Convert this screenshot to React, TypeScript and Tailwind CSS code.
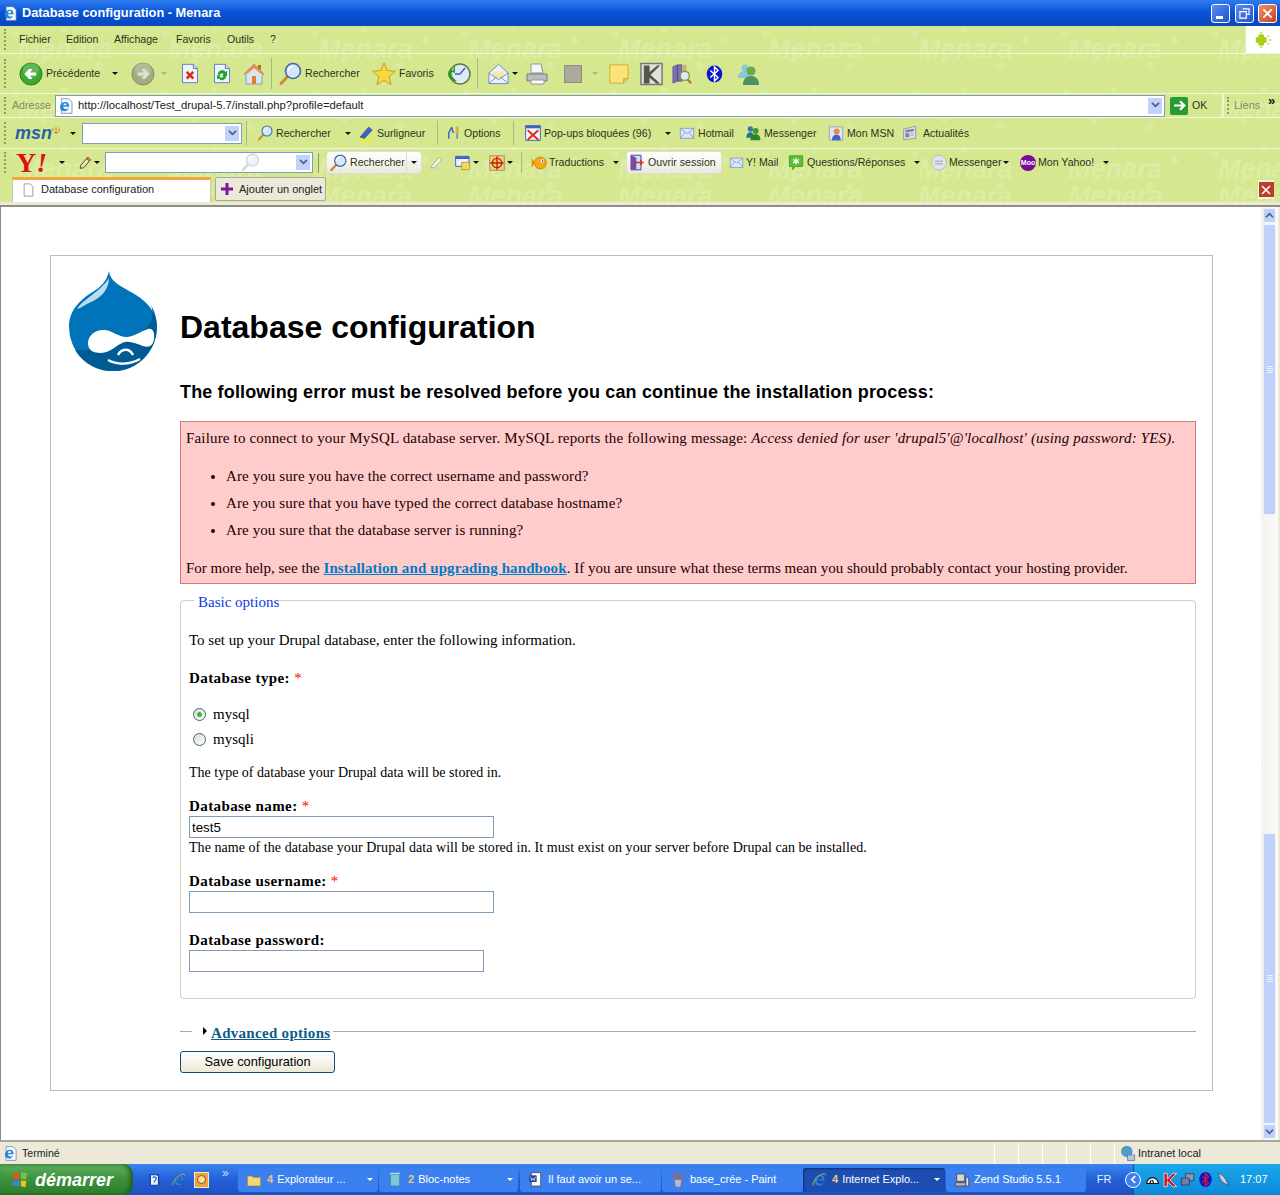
import type { ReactNode } from 'react';

// Old IE/Menara browser window on a Drupal 5 install page. Chrome rows are fixed-height flex rows.

const waterRows = [0, 1, 2, 3];
const waterCols = [0, 1, 2, 3, 4, 5, 6, 7, 8];

function Svg({ className, children }: { className: string; children: ReactNode }) {
  return (
    <svg viewBox="0 0 24 24" className={`shrink-0 ${className}`}>
      {children}
    </svg>
  );
}

function IeIcon({ className }: { className: string }) {
  return (
    <Svg className={className}>
      <path d="M5 14c0-6 4-10 9-10 5 0 7 4 7 9H9c.3 5 7 6 11 2-1 4-4 6-8 6-4 0-7-3-7-7zM9 10.500h7.500C16.500 8 14.800 6.500 13 6.500 11 6.500 9.500 8 9 10.500z" fill="#2a86d8" stroke="#0f4f9a" strokeWidth=".8" />
      <path d="M3 20C2 17 7 8 15 4c4-2 7-2 7 1" fill="none" stroke="#e8b030" strokeWidth="1.300" />
    </Svg>
  );
}

function PageIe({ className }: { className: string }) {
  return (
    <Svg className={className}>
      <path d="M5 1h11l5 5v17H5z" fill="#f4f8ff" stroke="#53708f" />
      <path d="M3 14c0-5 4-8 8-8s6 3 6 7H8c.3 4 5 5 8 2-1 3-3 5-6 5-4 0-7-2-7-6zM8 11h5c0-2-1-3-2.500-3S8.500 9 8 11z" fill="#2a86d8" />
    </Svg>
  );
}

function ArrowCircle({ className, dir, grey }: { className: string; dir: 'left' | 'right'; grey?: boolean }) {
  const d = dir === 'left' ? 'M17 10.500h-6l2.500-3.500H10l-4.500 5 4.500 5h3.500L11 13.500h6z' : 'M7 10.500h6L10.500 7H14l4.500 5-4.500 5h-3.500l2.500-3.500H7z';
  return (
    <Svg className={className}>
      <circle cx="12" cy="12" r="11" fill={grey ? '#a3ab84' : '#3ea82f'} stroke={grey ? '#858c6c' : '#1f7a1c'} />
      <circle cx="12" cy="8" r="8" fill="#fff" opacity=".18" />
      <path d={d} fill={grey ? '#dfe3c9' : '#fff'} />
    </Svg>
  );
}

function DocBase({ children }: { children: ReactNode }) {
  return (
    <>
      <path d="M3 1h13l5 5v17H3z" fill="#eef3ff" stroke="#4e6fb0" />
      <path d="M16 1v5h5" fill="#c9d6f2" stroke="#4e6fb0" />
      {children}
    </>
  );
}

function Magnifier({ className, pale }: { className: string; pale?: boolean }) {
  return (
    <Svg className={className}>
      <path d="M10 14L3 21.500" stroke={pale ? '#cfdcc0' : '#c98a2e'} strokeWidth="3" strokeLinecap="round" />
      <circle cx="15" cy="9" r="7.500" fill={pale ? '#eef4fb' : '#d5e6f8'} stroke={pale ? '#c9d5e0' : '#3f6aa8'} strokeWidth="1.600" />
      <path d="M10.500 9c0-2.500 2-4.500 4.500-4.500" stroke="#fff" strokeWidth="1.500" fill="none" />
    </Svg>
  );
}

function Mail({ className, open }: { className: string; open?: boolean }) {
  return (
    <Svg className={className}>
      {open && <path d="M2 11L12 2l10 9" fill="#f2e9c8" stroke="#6f8ac2" />}
      <path d="M2 5h20v15H2z" fill="#dbe5fb" stroke="#6f8ac2" />
      <path d="M2 5l10 8 10-8M2 20l7-9M22 20l-7-9" fill="none" stroke="#6f8ac2" />
    </Svg>
  );
}

function Friends({ className }: { className: string }) {
  return (
    <Svg className={className}>
      <circle cx="8" cy="6" r="4" fill="#2f7f9c" />
      <path d="M2 19c0-6 3-8 6-8s5 2 5 8z" fill="#2a6f90" />
      <circle cx="16" cy="9" r="4.500" fill="#3f9a3a" />
      <path d="M8 23c0-7 4-9 8-9s7 2 7 9z" fill="#2f8430" />
    </Svg>
  );
}

function Grip() {
  return <span className="ml-[4px] h-[75%] w-[3px] shrink-0 border-l-2 border-dotted border-[#8f9b6a]" />;
}

function Sep({ className }: { className: string }) {
  return <span className={`h-[78%] w-px shrink-0 bg-[#a9b888] ${className}`} />;
}

function Caret({ className, faint }: { className: string; faint?: boolean }) {
  return (
    <span
      className={`h-0 w-0 shrink-0 border-x-[3px] border-t-[3px] border-x-transparent ${faint ? 'border-t-[#aab78a]' : 'border-t-[#111]'} ${className}`}
    />
  );
}

function Combo() {
  return (
    <span className="flex h-full w-[16px] shrink-0 items-center justify-center border border-white bg-[#c1d3fb]">
      <svg viewBox="0 0 10 8" className="h-[7px] w-[9px]">
        <path d="M1 1l4 4 4-4" fill="none" stroke="#4d6185" strokeWidth="2" />
      </svg>
    </span>
  );
}

function Label({ className, children }: { className: string; children: ReactNode }) {
  return <span className={`shrink-0 text-[10.600px] whitespace-nowrap text-[#2b3320] ${className}`}>{children}</span>;
}

function Watermark() {
  return (
    <div className="absolute inset-0 overflow-hidden">
      <svg className="absolute inset-0 h-full w-full">
        <defs>
          <pattern id="diamonds" width="150" height="60" patternUnits="userSpaceOnUse">
            <path d="M10 8l5-5 5 5-5 5zM60 4l4-4 4 4-4 4zM120 14l5-5 5 5-5 5zM40 34l4-4 4 4-4 4zM95 40l5-5 5 5-5 5z" fill="#d9eb9c" />
          </pattern>
        </defs>
        <rect width="100%" height="100%" fill="url(#diamonds)" />
      </svg>
      <div className="grid grid-cols-[repeat(9,150px)] grid-rows-[60px_60px_27px_60px] pl-[18px] pt-[8px]">
        {waterRows.map(r =>
          waterCols.map(c => (
            <span key={`${r}-${c}`} className="text-[27px] leading-[30px] font-bold italic text-[#dcedA3]">
              Menara
            </span>
          ))
        )}
      </div>
    </div>
  );
}

function TitleBar() {
  return (
    <div className="relative flex h-[26px] items-center bg-gradient-to-b from-[#2f7cf0] via-[#0552d6] to-[#0a46bd]">
      <PageIe className="ml-[3px] h-[15px] w-[15px]" />
      <span className="ml-[4px] pt-px text-[12.800px] font-bold whitespace-nowrap text-white">Database configuration - Menara</span>
      <span className="ml-auto flex h-[19px] w-[19px] items-end rounded-[3px] border border-white bg-gradient-to-br from-[#5a8cf0] to-[#2351cf] pb-[3px] pl-[4px]">
        <span className="h-[3px] w-[7px] bg-white" />
      </span>
      <span className="ml-[5px] flex h-[19px] w-[19px] items-center justify-center rounded-[3px] border border-white bg-gradient-to-br from-[#5a8cf0] to-[#2351cf]">
        <svg viewBox="0 0 12 12" className="h-[11px] w-[11px]">
          <path d="M4 1h7v6H9M1 4h7v7H1z" fill="none" stroke="#fff" strokeWidth="1.300" />
        </svg>
      </span>
      <span className="mr-[3px] ml-[4px] flex h-[19px] w-[19px] items-center justify-center rounded-[3px] border border-white bg-gradient-to-br from-[#ef8f6c] to-[#c9401e]">
        <svg viewBox="0 0 12 12" className="h-[11px] w-[11px]">
          <path d="M1.500 1.500l9 9M10.500 1.500l-9 9" stroke="#fff" strokeWidth="2" />
        </svg>
      </span>
    </div>
  );
}

function MenuBar() {
  return (
    <div className="relative flex h-[28px] items-center border-b border-[#f2f8dc]">
      <Grip />
      <Label className="ml-[12px] w-[47px]">Fichier</Label>
      <Label className="w-[48px]">Edition</Label>
      <Label className="w-[62px]">Affichage</Label>
      <Label className="w-[51px]">Favoris</Label>
      <Label className="w-[43px]">Outils</Label>
      <Label className="w-[10px]">?</Label>
      <span className="ml-auto flex h-full w-[35px] items-center justify-center border-l border-[#e3e3d0] bg-white">
        <svg viewBox="0 0 20 20" className="h-[18px] w-[18px]">
          <path d="M5 4h6v12H5zM2 7h12v6H2z" fill="#a8d010" />
          <path d="M15 5h2v2h-2zM17 9h2v2h-2zM15 13h2v2h-2zM7 1h2v2H7zM7 17h2v2H7z" fill="#bfdc50" />
        </svg>
      </span>
    </div>
  );
}

function MainToolbar() {
  return (
    <div className="relative flex h-[40px] items-center border-b border-[#f2f8dc]">
      <Grip />
      <ArrowCircle dir="left" className="ml-[12px] h-[24px] w-[24px]" />
      <Label className="ml-[3px] w-[56px]">Précédente</Label>
      <Caret className="ml-[10px]" />
      <ArrowCircle dir="right" grey className="ml-[13px] h-[24px] w-[24px]" />
      <Caret faint className="ml-[6px]" />
      <Svg className="ml-[13px] h-[23px] w-[20px]">
        <DocBase>
          <path d="M8 10l8 8M16 10l-8 8" stroke="#e02c14" strokeWidth="3" />
        </DocBase>
      </Svg>
      <Svg className="ml-[12px] h-[23px] w-[20px]">
        <DocBase>
          <path d="M7 13a5 5 0 0 1 9-3l2-1v6h-6l2-2a3 3 0 0 0-5 1zM17 15a5 5 0 0 1-9 3l-2 1v-5h5l-2 2a3 3 0 0 0 5-1z" fill="#25a52f" />
        </DocBase>
      </Svg>
      <Svg className="ml-[10px] h-[24px] w-[24px]">
        <path d="M2 12L12 2l10 10-2 1v9H4v-9z" fill="#d7e5f5" stroke="#8a9cb8" />
        <path d="M2 12L12 2l10 10-3 0-7-6-7 6z" fill="#ef8f3c" />
        <path d="M10 14h4v8h-4z" fill="#e57e2c" />
        <path d="M16 3h3v5l-3-2z" fill="#b86a30" />
      </Svg>
      <Sep className="ml-[5px]" />
      <Magnifier className="ml-[6px] h-[24px] w-[24px]" />
      <Label className="ml-[3px] w-[55px]">Rechercher</Label>
      <Svg className="ml-[12px] h-[24px] w-[24px]">
        <path d="M12 1l3.300 7.500 8 .8-6 5.400 1.800 8L12 18.500 4.900 22.700l1.800-8-6-5.400 8-.8z" fill="#f7d83a" stroke="#c99a20" />
      </Svg>
      <Label className="ml-[3px] w-[36px]">Favoris</Label>
      <Svg className="ml-[12px] h-[24px] w-[24px]">
        <circle cx="13" cy="12" r="10" fill="#dfe9f8" stroke="#5e7d3a" strokeWidth="1.500" />
        <path d="M13 12l5-6M13 12H8" stroke="#3a6ab0" strokeWidth="1.600" />
        <path d="M1 12c0-3 2-5 3-6l2 3 2-7v9l-3-1c-1 2 0 6 5 9-5 1-9-3-9-7z" fill="#2f9a2c" />
      </Svg>
      <Sep className="ml-[6px]" />
      <Svg className="ml-[9px] h-[24px] w-[23px]">
        <path d="M2 11L12 2l10 9v11H2z" fill="#eef3ff" stroke="#6f8ac2" />
        <path d="M6 9h12v6l-6 3-6-3z" fill="#f6e7a8" />
        <path d="M2 11l10 7 10-7M2 22l8-7M22 22l-8-7" fill="none" stroke="#6f8ac2" />
      </Svg>
      <Caret className="ml-[2px]" />
      <Svg className="ml-[7px] h-[24px] w-[24px]">
        <path d="M6 2h10l2 9H6z" fill="#f8f8f8" stroke="#8d949c" />
        <path d="M2 12h20v7H2z" fill="#b9bec4" stroke="#757b82" />
        <path d="M6 18h13v4H6z" fill="#fff" stroke="#8d949c" />
      </Svg>
      <span className="ml-[15px] h-[18px] w-[18px] shrink-0 border border-[#8e8e80] bg-[#aaa99c]" />
      <Caret faint className="ml-[10px]" />
      <Svg className="ml-[10px] h-[24px] w-[22px]">
        <path d="M2 2h20v15l-5 5H2z" fill="#fbe27a" stroke="#d0a830" />
        <path d="M17 22v-5h5" fill="#e8c54e" stroke="#d0a830" />
      </Svg>
      <Svg className="ml-[10px] h-[24px] w-[23px]">
        <path d="M1 1h22v22H1z" fill="#e2e2dc" stroke="#77776e" strokeWidth="1.500" />
        <path d="M4 3h6v7l8-7h3L11 13l10 9h-4l-7-6v6H4z" fill="#55554f" />
      </Svg>
      <Svg className="ml-[8px] h-[24px] w-[22px]">
        <path d="M2 4l5-2v18l-5 2zM7 2h5v18H7z" fill="#7d71b8" stroke="#4b4480" strokeWidth=".6" />
        <path d="M12 2h5v11h-5z" fill="#c7b26e" />
        <circle cx="15" cy="14" r="5" fill="#d8ecf8" stroke="#a08a45" strokeWidth="1.500" />
        <path d="M18 18l4 4" stroke="#b47a28" strokeWidth="2.500" />
      </Svg>
      <Svg className="ml-[13px] h-[24px] w-[17px]">
        <ellipse cx="12" cy="12" rx="11" ry="12" fill="#0a17cc" />
        <path d="M6 7l11 10-5 5V2l5 5L6 17" fill="none" stroke="#fff" strokeWidth="2" />
      </Svg>
      <Svg className="ml-[13px] h-[24px] w-[24px]">
        <circle cx="9" cy="6" r="3.500" fill="#8cc4d8" />
        <path d="M2 16c0-5 3-7 7-7s4 3 4 7z" fill="#8cc4d8" />
        <circle cx="15" cy="9" r="4.500" fill="#6aa84f" />
        <path d="M7 23c0-7 4-9 8-9s8 2 8 9z" fill="#4f9160" />
      </Svg>
    </div>
  );
}

function AddressBar() {
  return (
    <div className="relative flex h-[24px] items-center border-b border-[#f2f8dc]">
      <Grip />
      <span className="ml-[5px] w-[38px] shrink-0 text-[10.600px] text-[#7d8a66]">Adresse</span>
      <div className="ml-[5px] flex h-[22px] w-[1110px] shrink-0 items-center border border-[#7f9db9] bg-white pr-px pl-[2px]">
        <PageIe className="h-[16px] w-[16px]" />
        <span className="ml-[4px] text-[11.300px] whitespace-nowrap text-[#222]">http://localhost/Test_drupal-5.7/install.php?profile=default</span>
        <span className="ml-auto h-full py-px">
          <Combo />
        </span>
      </div>
      <span className="ml-[5px] flex h-[18px] w-[18px] shrink-0 items-center justify-center rounded-[2px] bg-[#2a9a38]">
        <svg viewBox="0 0 12 12" className="h-[13px] w-[13px]">
          <path d="M1 6h9M6.500 2L10.500 6l-4 4" fill="none" stroke="#fff" strokeWidth="2" />
        </svg>
      </span>
      <Label className="ml-[4px] w-[15px]">OK</Label>
      <span className="ml-[15px] h-full w-[2px] shrink-0 bg-[#eef6d0]" />
      <span className="ml-[3px] h-[75%] w-[3px] shrink-0 border-l-2 border-dotted border-[#8f9b6a]" />
      <span className="ml-[4px] w-[25px] shrink-0 text-[#7d8a66]">Liens</span>
      <span className="ml-[9px] self-start text-[13px] leading-[14px] font-bold text-[#111]">»</span>
    </div>
  );
}

function MsnBar() {
  return (
    <div className="relative flex h-[31px] items-center border-b border-[#f2f8dc]">
      <Grip />
      <span className="ml-[8px] flex w-[46px] shrink-0 items-start">
        <span className="text-[18px] leading-[18px] font-bold italic text-[#2b5fa8]">msn</span>
        <svg viewBox="0 0 12 12" className="-mt-[2px] -ml-px h-[16px] w-[15px]">
          <path d="M2 8L1 3l3 3zM8 7l3-5-1 7z" fill="#e9a020" />
          <path d="M5 6l1-5 1 5z" fill="#5fae3a" />
          <path d="M4 10l2-3 2 3z" fill="#d84a30" />
        </svg>
      </span>
      <Caret className="ml-[9px]" />
      <span className="ml-[6px] flex h-[21px] w-[160px] shrink-0 justify-end border border-[#7f9db9] bg-white p-px">
        <Combo />
      </span>
      <Sep className="ml-[4px]" />
      <Magnifier className="ml-[10px] h-[16px] w-[16px]" />
      <Label className="ml-[3px] w-[55px]">Rechercher</Label>
      <Caret className="ml-[14px]" />
      <Svg className="ml-[7px] h-[17px] w-[17px]">
        <path d="M3 17L15 3l5 4L9 19z" fill="#3f63c8" stroke="#26408c" />
        <path d="M1 20h20v3H1z" fill="#f4ee20" />
      </Svg>
      <Label className="ml-[2px] w-[48px]">Surligneur</Label>
      <Sep className="ml-[12px]" />
      <Svg className="ml-[9px] h-[18px] w-[14px]">
        <path d="M8 2L3 12v10M8 2l3 10" fill="none" stroke="#3f63c8" strokeWidth="2.500" />
        <path d="M15 1h5v12h-5z" fill="#e0b030" />
        <path d="M17.500 13v9" stroke="#5f7ec8" strokeWidth="2.500" />
      </Svg>
      <Label className="ml-[3px] w-[38px]">Options</Label>
      <Sep className="ml-[11px]" />
      <Svg className="ml-[11px] h-[16px] w-[16px]">
        <path d="M1 1h22v22H1z" fill="#f6f8ff" stroke="#3f63c8" strokeWidth="1.500" />
        <path d="M1 1h22v4H1z" fill="#3f63c8" />
        <path d="M4 8l16 14M20 8L4 22" stroke="#e02c14" strokeWidth="3" />
      </Svg>
      <Label className="ml-[3px] w-[108px]">Pop-ups bloquées (96)</Label>
      <Caret className="ml-[13px]" />
      <Mail className="ml-[8px] h-[16px] w-[16px]" />
      <Label className="ml-[3px] w-[35px]">Hotmail</Label>
      <Friends className="ml-[12px] h-[16px] w-[16px]" />
      <Label className="ml-[3px] w-[52px]">Messenger</Label>
      <Svg className="ml-[12px] h-[17px] w-[16px]">
        <path d="M2 2h20v20H2z" fill="#dfe6f6" stroke="#7c8bb4" />
        <circle cx="13" cy="9" r="4.500" fill="#e88a48" />
        <path d="M6 22c0-6 3-8 7-8s6 2 6 8z" fill="#3f63c8" />
      </Svg>
      <Label className="ml-[3px] w-[44px]">Mon MSN</Label>
      <Svg className="ml-[12px] h-[16px] w-[16px]">
        <path d="M1 6l18-4v18L1 22z" fill="#e4e6ee" stroke="#6f7894" />
        <path d="M4 8l12-2v3L4 11zM4 13h5v5H4zM11 13h5M11 16h5" fill="#7d86a4" stroke="#7d86a4" />
      </Svg>
      <Label className="ml-[4px] w-[47px]">Actualités</Label>
    </div>
  );
}

function YahooBar() {
  return (
    <div className="relative flex h-[27px] items-center">
      <Grip />
      <span className="ml-[9px] w-[34px] shrink-0 font-['Liberation_Serif',serif] text-[28px] leading-[24px] font-bold text-[#e01010]">
        Y<em>!</em>
      </span>
      <Caret className="ml-[9px]" />
      <Svg className="ml-[14px] h-[15px] w-[14px]">
        <path d="M3 17L15 3l5 4L8 21l-6 1z" fill="#f7e8a0" stroke="#333" strokeWidth="1.500" />
        <path d="M13 5l5 4" stroke="#d04020" strokeWidth="2.500" />
      </Svg>
      <Caret className="ml-px" />
      <span className="ml-[5px] flex h-[21px] w-[208px] shrink-0 items-center justify-end border border-[#7f9db9] bg-white p-px">
        <Magnifier pale className="mr-[33px] h-[19px] w-[24px]" />
        <Combo />
      </span>
      <span className="ml-[5px] h-[20px] w-[6px] shrink-0 border-l border-[#8a9570]" />
      <span className="ml-[2px] flex h-[23px] w-[96px] shrink-0 items-center rounded-[4px] border border-[#dcdcd0] bg-gradient-to-b from-white to-[#ebe9dc] pl-[2px]">
        <Magnifier className="h-[18px] w-[18px]" />
        <span className="ml-[3px] w-[56px] text-[10.600px] whitespace-nowrap text-[#2b3320]">Rechercher</span>
        <span className="flex h-full flex-1 items-center justify-center border-l border-[#dcdcd0]">
          <Caret className="" />
        </span>
      </span>
      <Svg className="ml-[7px] h-[16px] w-[15px]">
        <path d="M4 17L16 3l4 4L9 19l-6 1z" fill="#f5f5ee" stroke="#85907a" />
        <path d="M1 22h20" stroke="#cfd5c0" strokeWidth="2" />
      </Svg>
      <Svg className="ml-[11px] h-[16px] w-[16px]">
        <path d="M1 2h20v15H1z" fill="#eef3ff" stroke="#3f63c8" strokeWidth="1.500" />
        <path d="M1 2h20v4H1z" fill="#3f63c8" />
        <path d="M10 11h12v11H10z" fill="#f5d75a" stroke="#b08a20" />
      </Svg>
      <Caret className="ml-[2px]" />
      <Svg className="ml-[10px] h-[16px] w-[16px]">
        <path d="M1 1h22v22H1z" fill="#f1cf5e" stroke="#8a6ab0" />
        <circle cx="12" cy="12" r="7" fill="none" stroke="#c01818" strokeWidth="2" />
        <path d="M12 2v20M2 12h20" stroke="#c01818" strokeWidth="2" />
      </Svg>
      <Caret className="ml-[2px]" />
      <Sep className="ml-[8px]" />
      <Svg className="ml-[9px] h-[16px] w-[16px]">
        <ellipse cx="14" cy="12" rx="9" ry="9" fill="#f5a818" stroke="#b86d10" />
        <path d="M6 12L1 5v14z" fill="#ec8a10" />
        <circle cx="17" cy="9" r="2.500" fill="#fff" />
        <circle cx="17.500" cy="9" r="1.200" fill="#222" />
      </Svg>
      <Label className="ml-[2px] w-[56px]">Traductions</Label>
      <Caret className="ml-[8px]" />
      <span className="ml-[7px] flex h-[23px] w-[96px] shrink-0 items-center rounded-[3px] border border-[#dcdcd0] bg-gradient-to-b from-white to-[#ebe9dc] pl-[2px]">
        <Svg className="h-[17px] w-[16px]">
          <path d="M3 1h15v22H3z" fill="#cfe0f8" stroke="#3a4c9a" strokeWidth="1.500" />
          <path d="M3 1l8 4v18H3z" fill="#7d4aa0" />
          <path d="M10 12h12M18 8v8" stroke="#e02c14" strokeWidth="2.500" />
        </Svg>
        <span className="ml-[3px] text-[10.600px] whitespace-nowrap text-[#2b3320]">Ouvrir session</span>
      </span>
      <Mail className="ml-[7px] h-[15px] w-[15px]" />
      <Label className="ml-[2px] w-[31px]">Y! Mail</Label>
      <Svg className="ml-[11px] h-[17px] w-[16px]">
        <path d="M2 2h20v16H11l-4 5v-5H2z" fill="#5ac02c" stroke="#2f8a1c" />
        <path d="M12 5v10M7.500 7.500l9 5M16.500 7.500l-9 5" stroke="#fff" strokeWidth="2" />
      </Svg>
      <Label className="ml-[3px] w-[99px]">Questions/Réponses</Label>
      <Caret className="ml-[8px]" />
      <Svg className="ml-[11px] h-[17px] w-[16px]">
        <circle cx="12" cy="12" r="11" fill="#e2e6ec" stroke="#a5adb8" />
        <path d="M6 10h12M6 14h12" stroke="#9aa2ae" strokeWidth="1.500" />
      </Svg>
      <Label className="ml-[2px] w-[51px]">Messenger</Label>
      <Caret className="ml-[3px]" />
      <span className="ml-[11px] flex h-[16px] w-[16px] shrink-0 items-center justify-center rounded-full bg-[#7a0a9c] text-[7px] leading-none font-bold text-white">
        Moo
      </span>
      <Label className="ml-[2px] w-[57px]">Mon Yahoo!</Label>
      <Caret className="ml-[8px]" />
    </div>
  );
}

function TabBar() {
  return (
    <div className="relative flex h-[26px] items-end">
      <div className="ml-[12px] flex h-[25px] w-[199px] items-center border-x border-x-[#c8c8b8] border-t-[3px] border-t-[#f0a63a] bg-white pb-[3px] pl-[10px]">
        <svg viewBox="0 0 12 16" className="h-[14px] w-[11px]">
          <path d="M1 1h7l3 3v11H1z" fill="#fff" stroke="#8d949c" />
        </svg>
        <span className="ml-[7px] whitespace-nowrap text-[#222]">Database configuration</span>
      </div>
      <div className="mb-px ml-[4px] flex h-[24px] w-[111px] items-center rounded-[2px] border border-[#a9a998] bg-[#ece9d8] pl-[5px]">
        <svg viewBox="0 0 12 12" className="h-[12px] w-[12px]">
          <path d="M4.500 0h3v4.500H12v3H7.500V12h-3V7.500H0v-3h4.500z" fill="#7a1a9a" />
        </svg>
        <span className="ml-[6px] whitespace-nowrap text-[#222]">Ajouter un onglet</span>
      </div>
      <span className="mr-[6px] mb-[3px] ml-auto flex h-[19px] w-[16px] items-center justify-center bg-[#f2f2e6]">
        <span className="flex h-[15px] w-[15px] items-center justify-center bg-[#b8402a]">
          <svg viewBox="0 0 10 10" className="h-[10px] w-[10px]">
            <path d="M1 1l8 8M9 1l-8 8" stroke="#fff" strokeWidth="1.600" />
          </svg>
        </span>
      </span>
    </div>
  );
}

function DrupalLogo() {
  return (
    <svg viewBox="0 0 88 100" className="h-[100px] w-[88px]">
      <path d="M40 0C41 10 50 14 60 20 76 28 88 40 88 56A44 44 0 1 1 0 56C0 40 10 30 22 22 32 16 38 10 40 0z" fill="#0073ba" />
      <path d="M82 34C87 48 80 60 60 66L57 70C40 78 20 80 6 79A44 44 0 0 0 82 78 44 44 0 0 0 82 34z" fill="#005a94" />
      <path d="M8 38C14 28 30 22 40 7 40 20 30 28 20 32 14 35 10 38 8 38z" fill="#b9dcf0" />
      <path d="M19 72C19 64 27 58 36 59 44 60 50 66 57 66 65 66 72 60 79 58 84 57 86 62 85 68 84 75 80 77 74 75 68 73 62 70 56 71 48 73 42 82 32 82 24 82 19 79 19 72z" fill="#fff" />
      <path d="M39 89C48 94 60 94 71 88M49 84C52 78 60 76 64 84" fill="none" stroke="#fff" strokeWidth="2.500" />
    </svg>
  );
}

function Required() {
  return <span className="font-normal text-[#f00]"> *</span>;
}

function Field({ label, required, width, value, className }: { label: string; required?: boolean; width: string; value?: string; className: string }) {
  return (
    <>
      <div className={`h-[19px] leading-[18px] font-bold tracking-[0.4px] ${className}`}>
        {label}: {required && <Required />}
      </div>
      <input
        readOnly
        value={value ?? ''}
        className={`block h-[22px] border border-[#7f9db9] bg-white px-[2px] font-['Liberation_Sans',sans-serif] text-[13.300px] text-black outline-none ${width}`}
      />
    </>
  );
}

function InstallForm() {
  return (
    <div className="flex-1 pr-[16px]">
      <h1 className="mt-[51px] h-[40px] font-['Liberation_Sans',sans-serif] text-[32px] leading-[40px] font-bold text-black">Database configuration</h1>
      <h2 className="mt-[33px] h-[24px] font-['Liberation_Sans',sans-serif] text-[18px] leading-[24px] font-bold tracking-[0.15px] text-black">
        The following error must be resolved before you can continue the installation process:
      </h2>
      <div className="mt-[17px] h-[163px] border border-[#dd7777] bg-[#ffcccc] px-[5px] text-[#200]">
        <p className="mt-[6px] h-[20px] leading-[20px] tracking-[0.17px] whitespace-nowrap">
          Failure to connect to your MySQL database server. MySQL reports the following message: <em>Access denied for user 'drupal5'@'localhost' (using password: YES).</em>
        </p>
        <ul className="mt-[15px] list-disc pl-[40px] leading-[27px] tracking-[0.1px]">
          <li>Are you sure you have the correct username and password?</li>
          <li>Are you sure that you have typed the correct database hostname?</li>
          <li>Are you sure that the database server is running?</li>
        </ul>
        <p className="mt-[14px] h-[20px] leading-[20px] whitespace-nowrap">
          For more help, see the <a className="font-bold tracking-[0.1px] text-[#027ac6] underline">Installation and upgrading handbook</a>. If you are unsure what these terms mean you should probably contact your hosting provider.
        </p>
      </div>
      <fieldset className="mt-[6px] h-[409px] rounded-[4px] border border-[#d0d0bf] pl-[8px]">
        <legend className="ml-[5px] h-[20px] pl-[4px] leading-[24px] text-[#0a3ce6]">Basic options</legend>
        <p className="mt-[21px] h-[20px] leading-[18px]">To set up your Drupal database, enter the following information.</p>
        <div className="mt-[18px] h-[20px] leading-[18px] font-bold tracking-[0.4px]">
          Database type: <Required />
        </div>
        <div className="mt-[15px] flex h-[20px] items-center pl-[4px] leading-[20px]">
          <span className="flex h-[13px] w-[13px] items-center justify-center rounded-full border border-[#3f5f80] bg-gradient-to-br from-[#dcdcd4] to-white">
            <span className="h-[5px] w-[5px] rounded-full bg-[#3cb83c]" />
          </span>
          <span className="ml-[7px]">mysql</span>
        </div>
        <div className="mt-[5px] flex h-[20px] items-center pl-[4px] leading-[20px]">
          <span className="h-[13px] w-[13px] rounded-full border border-[#3f5f80] bg-gradient-to-br from-[#dcdcd4] to-white" />
          <span className="ml-[7px]">mysqli</span>
        </div>
        <p className="mt-[14px] h-[20px] text-[14px] leading-[20px]">The type of database your Drupal data will be stored in.</p>
        <Field className="mt-[14px]" label="Database name" required width="w-[305px]" value="test5" />
        <p className="h-[20px] text-[14px] leading-[20px] tracking-[0.05px]">The name of the database your Drupal data will be stored in. It must exist on your server before Drupal can be installed.</p>
        <Field className="mt-[14px]" label="Database username" required width="w-[305px]" />
        <Field className="mt-[18px]" label="Database password" width="w-[295px]" />
      </fieldset>
      <div className="mt-[22px] flex h-[20px] items-center">
        <span className="h-px w-[12px] bg-[#a8a89c]" />
        <span className="ml-[11px] h-0 w-0 border-y-[4px] border-l-[4px] border-y-transparent border-l-black" />
        <a className="ml-[4px] pt-[4px] font-bold tracking-[0.3px] whitespace-nowrap text-[#0d5a8c] underline">Advanced options</a>
        <span className="ml-[3px] h-px flex-1 bg-[#a8a89c]" />
      </div>
      <button className="mt-[10px] block h-[22px] w-[155px] rounded-[3px] border border-[#0f4c7a] bg-gradient-to-b from-white to-[#ece9d8] font-['Liberation_Sans',sans-serif] text-[12.800px] text-black">
        Save configuration
      </button>
    </div>
  );
}

function ScrollThumb({ className }: { className: string }) {
  return (
    <div className={`flex items-center justify-center rounded-[2px] border border-[#eef2fd] bg-[#c0d0f8] ${className}`}>
      <div className="flex w-[6px] flex-col gap-px">
        {[0, 1, 2, 3].map(i => (
          <span key={i} className="h-px bg-[#eef2fd]" />
        ))}
      </div>
    </div>
  );
}

function ScrollButton({ up }: { up?: boolean }) {
  return (
    <div className="mx-[2px] flex h-[15px] items-center justify-center rounded-[2px] border border-[#eef2fd] bg-[#c0d0f8]">
      <svg viewBox="0 0 10 8" className="h-[7px] w-[9px]">
        <path d={up ? 'M1 6l4-4 4 4' : 'M1 2l4 4 4-4'} fill="none" stroke="#4d6185" strokeWidth="2" />
      </svg>
    </div>
  );
}

function Scrollbar() {
  return (
    <div className="flex w-[17px] shrink-0 flex-col bg-gradient-to-r from-[#f3f2ec] to-[#fcfcf9] pt-px">
      <ScrollButton up />
      <ScrollThumb className="mx-[2px] mt-[1px] h-[291px]" />
      <div className="h-[318px]" />
      <ScrollThumb className="mx-[2px] h-[291px]" />
      <ScrollButton />
    </div>
  );
}

function StatusBar() {
  return (
    <div className="flex h-[24px] items-center border-t-2 border-[#a8a79c] bg-[#ece9d8]">
      <PageIe className="ml-[3px] h-[15px] w-[15px]" />
      <span className="ml-[4px] w-[40px] text-[10.600px] text-[#222]">Terminé</span>
      <span className="ml-[932px] h-full w-[24px] shrink-0 border-l border-white" />
      <span className="h-full w-[24px] shrink-0 border-l border-white" />
      <span className="h-full w-[24px] shrink-0 border-l border-white" />
      <span className="h-full w-[24px] shrink-0 border-l border-white" />
      <span className="h-full w-[24px] shrink-0 border-l border-white" />
      <span className="flex h-full flex-1 items-center border-l border-white pl-[4px]">
        <Svg className="h-[17px] w-[17px]">
          <circle cx="11" cy="9" r="8" fill="#4a9ad8" />
          <path d="M6 6c3-2 6 0 5 3s-4 2-5 0z" fill="#5ab050" />
          <path d="M12 14h10v8H12z" fill="#b8c4d8" stroke="#5a6a88" />
        </Svg>
        <span className="ml-[2px] text-[#222]">Intranet local</span>
      </span>
    </div>
  );
}

function TaskButton({ className, count, icon, children, arrow, active }: { className: string; count?: string; icon: ReactNode; children: ReactNode; arrow?: boolean; active?: boolean }) {
  return (
    <div className={`flex h-[24px] shrink-0 items-center rounded-[3px] pl-[8px] ${active ? 'bg-[#1c4db0] shadow-[inset_1px_1px_2px_#0f2f78]' : 'bg-[#3a80ef]'} ${className}`}>
      {icon}
      {count && <span className="ml-[5px] font-bold text-[#f4c27a]">{count}</span>}
      <span className="ml-[4px] whitespace-nowrap text-white">{children}</span>
      {arrow && (
        <span className="mr-[5px] ml-auto h-0 w-0 border-x-[3px] border-t-[3px] border-x-transparent border-t-white" />
      )}
    </div>
  );
}

function Taskbar() {
  return (
    <div className="flex h-[31px] items-center bg-gradient-to-b from-[#3a85f0] via-[#2460d8] to-[#1f50c0] text-white">
      <div className="flex h-full w-[133px] shrink-0 items-center rounded-r-[10px] bg-gradient-to-b from-[#5fae5f] via-[#3b923b] to-[#2c7c2c] pl-[10px] shadow-[inset_-3px_0_4px_#1f5f1f]">
        <svg viewBox="0 0 20 20" className="h-[18px] w-[20px]">
          <path d="M3 3l6-1v7l-7 .5z" fill="#e8502a" />
          <path d="M11 1.500l7 1-1 7-6-.5z" fill="#7ac142" />
          <path d="M2 11l7-.5V17l-8-1z" fill="#3f7fe0" />
          <path d="M11 10.500l6 .5-1 7-5-1z" fill="#f4c020" />
        </svg>
        <span className="ml-[5px] text-[18px] leading-none font-bold italic whitespace-nowrap text-white">démarrer</span>
      </div>
      <Svg className="ml-[15px] h-[16px] w-[14px]">
        <path d="M4 3h14v18H4z" fill="#eef3ff" stroke="#123a8a" strokeWidth="2" />
        <path d="M8 8c4-3 8 0 5 4l-3 4M15 3l4 3" stroke="#1f5fd0" strokeWidth="2" fill="none" />
      </Svg>
      <IeIcon className="ml-[9px] h-[16px] w-[15px]" />
      <span className="ml-[8px] flex h-[16px] w-[15px] shrink-0 items-center justify-center border border-[#f4e8c8] bg-[#f0a040]">
        <span className="h-[9px] w-[9px] rounded-full border border-[#8a4a10] bg-[#f8e0a0]" />
      </span>
      <span className="ml-[13px] w-[8px] self-start pt-[3px] text-[12px] leading-none text-[#cfe0ff]">»</span>
      <TaskButton
        arrow
        className="ml-[8px] w-[140px]"
        count="4"
        icon={
          <Svg className="h-[16px] w-[16px]">
            <path d="M2 6h7l2 2h11v13H2z" fill="#f4d47a" stroke="#a07820" />
          </Svg>
        }
      >
        Explorateur ...
      </TaskButton>
      <TaskButton
        arrow
        className="ml-px w-[139px]"
        count="2"
        icon={
          <Svg className="h-[16px] w-[16px]">
            <path d="M5 3h14v18H5z" fill="#7fc4d8" stroke="#3a7a90" />
            <path d="M5 2h14" stroke="#fff" strokeWidth="2" strokeDasharray="2 1" />
          </Svg>
        }
      >
        Bloc-notes
      </TaskButton>
      <TaskButton
        className="ml-[2px] w-[141px]"
        icon={
          <Svg className="h-[16px] w-[16px]">
            <path d="M5 1h14v20H5z" fill="#fff" stroke="#333" />
            <path d="M2 5h11v10H2z" fill="#1f3f9a" />
            <path d="M4 7l1.500 6L7.500 9l2 4L11 7" fill="none" stroke="#fff" />
          </Svg>
        }
      >
        Il faut avoir un se...
      </TaskButton>
      <TaskButton
        className="ml-px w-[141px]"
        icon={
          <Svg className="h-[16px] w-[16px]">
            <path d="M6 11h12l-2 12H8z" fill="#b0b8d8" stroke="#667" />
            <path d="M8 11L6 1M12 11V2M16 11l3-9" stroke="#d8502a" strokeWidth="2" />
          </Svg>
        }
      >
        base_crée - Paint
      </TaskButton>
      <TaskButton arrow active className="w-[142px]" count="4" icon={<IeIcon className="h-[16px] w-[16px]" />}>
        Internet Explo...
      </TaskButton>
      <TaskButton
        className="ml-px w-[140px]"
        icon={
          <Svg className="h-[16px] w-[16px]">
            <path d="M4 3h12v11H4z" fill="#d8d8d0" stroke="#333" />
            <path d="M2 16h16v5H2z" fill="#b8b8b0" stroke="#333" />
            <path d="M18 8h4v13h-4z" fill="#e8e8e0" stroke="#333" />
          </Svg>
        }
      >
        Zend Studio 5.5.1
      </TaskButton>
      <span className="ml-[10px] w-[16px] shrink-0 text-center text-[#e8f0ff]">FR</span>
      <div className="ml-auto flex h-full w-[147px] items-center bg-gradient-to-b from-[#1aa8ea] to-[#0d88d8] shadow-[inset_1px_0_1px_#0a4fa8]">
        <span className="-ml-[8px] flex h-[16px] w-[16px] shrink-0 items-center justify-center rounded-full border border-white bg-[#3a80ef]">
          <svg viewBox="0 0 8 10" className="h-[9px] w-[7px]">
            <path d="M6 1L2 5l4 4" fill="none" stroke="#fff" strokeWidth="2" />
          </svg>
        </span>
        <Svg className="ml-[4px] h-[14px] w-[15px]">
          <path d="M2 18a10 10 0 0 1 20 0z" fill="#fff" stroke="#111" strokeWidth="2" />
          <path d="M7 18l3-6M14 18l-2-6" stroke="#111" strokeWidth="2" />
        </Svg>
        <Svg className="ml-[2px] h-[16px] w-[16px]">
          <path d="M3 2h5v9l8-9h6L12 12l10 10h-6l-8-8v8H3z" fill="#d01818" stroke="#fff" />
        </Svg>
        <Svg className="ml-[2px] h-[16px] w-[15px]">
          <path d="M9 2h13v11H9z" fill="#8c98b8" stroke="#223" />
          <path d="M2 9h13v11H2z" fill="#6f7ea8" stroke="#223" />
        </Svg>
        <Svg className="ml-[3px] h-[17px] w-[15px]">
          <ellipse cx="12" cy="12" rx="10" ry="12" fill="#0a17cc" />
          <path d="M7 7l10 10-5 5V2l5 5L7 17" fill="none" stroke="#e01818" strokeWidth="2" />
        </Svg>
        <Svg className="ml-[3px] h-[17px] w-[15px]">
          <path d="M4 2c7 2 12 9 14 15l3 5-6-3C9 17 5 9 4 2z" fill="#c8ced8" stroke="#334" />
        </Svg>
        <span className="ml-[9px] whitespace-nowrap text-white">17:07</span>
      </div>
    </div>
  );
}

export default function App() {
  return (
    <div className="flex h-[1195px] w-[1280px] flex-col overflow-hidden bg-white font-['Liberation_Sans',sans-serif] text-[11px] leading-none">
      <TitleBar />
      <div className="relative bg-[#d5e88f]">
        <Watermark />
        <MenuBar />
        <MainToolbar />
        <AddressBar />
        <MsnBar />
        <YahooBar />
        <TabBar />
      </div>
      <div className="h-[3px] bg-[#ece9d8]" />
      <div className="flex h-[935px] border-t-2 border-l border-[#8e8d82] font-['Liberation_Serif',serif] text-[15px] text-black">
        <div className="flex-1 pt-[48px] pl-[49px]">
          <div className="flex h-[836px] w-[1163px] border border-[#bbbbbb]">
            <div className="w-[129px] shrink-0 pt-[15px] pl-[18px]">
              <DrupalLogo />
            </div>
            <InstallForm />
          </div>
        </div>
        <Scrollbar />
        <div className="w-[2px] bg-[#ece9d8]" />
      </div>
      <StatusBar />
      <Taskbar />
    </div>
  );
}
